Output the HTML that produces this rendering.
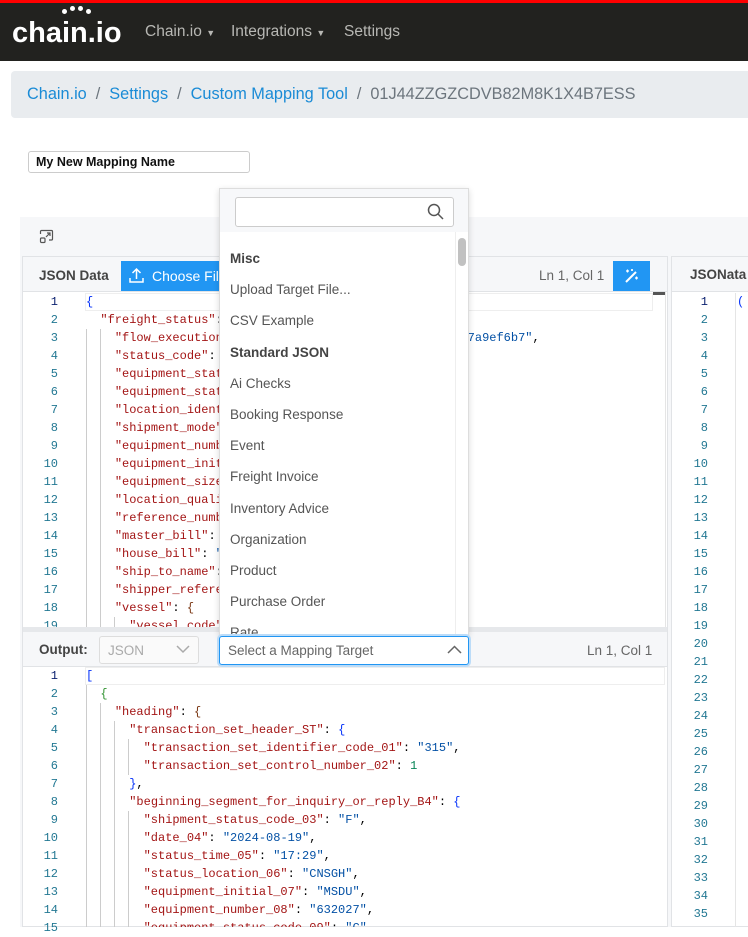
<!DOCTYPE html>
<html><head><meta charset="utf-8"><style>
*{box-sizing:border-box;margin:0;padding:0}
body{width:748px;height:927px;overflow:hidden;background:#fff;font-family:"Liberation Sans",sans-serif;position:relative}
.abs{position:absolute}
.nav{left:0;top:0;width:748px;height:61px;background:#22221f;border-top:3px solid #f00}
.nav .logo{left:12px;top:14px;color:#fff;font-size:29px;font-weight:bold;letter-spacing:0px}
.nav .m{top:20px;color:#b8b8b4;font-size:15.5px}
.crumb{left:11px;top:71px;width:750px;height:47px;background:#e9ecef;border-radius:4px;font-size:16.3px;color:#6c757d;padding:14px 0 0 16px;white-space:nowrap}
.crumb a{color:#1a8bd6;text-decoration:none}
.crumb span{margin:0 9px}
.mono{font-family:"Liberation Mono","DejaVu Sans Mono",monospace;font-size:12px;white-space:pre}
.ln{color:#237893;text-align:right;width:36px;line-height:18px}
.code{line-height:18px}
.k{color:#a31515}.s{color:#0451a5}.n{color:#098658}.b1{color:#0431fa}.b2{color:#319331}.b3{color:#7b3814}
.dd div{height:31.2px;line-height:31.2px;padding-left:10px;font-size:13.5px;color:#555}
</style></head><body>
<div class="abs nav">
  <div class="abs logo">chain.io</div>
  <div class="abs" style="left:62px;top:3px;width:30px;height:8px">
    <span class="abs" style="left:0;top:3px;width:5px;height:5px;border-radius:50%;background:#fff"></span>
    <span class="abs" style="left:8px;top:0;width:5px;height:5px;border-radius:50%;background:#fff"></span>
    <span class="abs" style="left:16px;top:0;width:5px;height:5px;border-radius:50%;background:#fff"></span>
    <span class="abs" style="left:24px;top:3px;width:5px;height:5px;border-radius:50%;background:#fff"></span>
  </div>
  <div class="abs m" style="left:145px">Chain.io <span style="font-size:9px">▼</span></div>
  <div class="abs m" style="left:231px">Integrations <span style="font-size:9px">▼</span></div>
  <div class="abs m" style="left:344px">Settings</div>
</div>
<div class="abs crumb"><a>Chain.io</a><span>/</span><a>Settings</a><span>/</span><a>Custom Mapping Tool</a><span>/</span>01J44ZZGZCDVB82M8K1X4B7ESS</div>
<div class="abs" style="left:28px;top:151px;width:222px;height:22px;border:1px solid #ccc;border-radius:3px;font-size:12.5px;font-weight:bold;padding:3px 0 0 7px;color:#111">My New Mapping Name</div>

<!-- panel area -->
<div class="abs" style="left:20px;top:217px;width:728px;height:710px;background:#f6f7f9"></div>
<svg class="abs" style="left:39px;top:229px" width="15" height="15" viewBox="0 0 15 15" fill="none" stroke="#555" stroke-width="1.2"><path d="M5 1.5h7.5a1 1 0 0 1 1 1v7.5a1 1 0 0 1-1 1H10"/><path d="M1.5 5v-2.5a1 1 0 0 1 1-1H5"/><rect x="1.5" y="9" width="4.5" height="4.5" rx="1"/><path d="M7 8l4-4M8 4h3v3"/></svg>

<!-- left editor -->
<div class="abs" style="left:22px;top:256px;width:646px;height:671px;background:#fff;border:1px solid #e1e3e6"></div>
<div class="abs" style="left:23px;top:257px;width:644px;height:35px;background:#f6f7f9;border-bottom:1px solid #e1e3e6"></div>
<div class="abs" style="left:39px;top:268px;font-size:13.5px;font-weight:bold;color:#444">JSON Data</div>
<div class="abs" style="left:121px;top:261px;width:110px;height:30px;background:#2196f3;color:#fff;font-size:14px;padding:7px 0 0 31px">Choose File</div>
<svg class="abs" style="left:128px;top:267px" width="17" height="17" viewBox="0 0 17 17" fill="none" stroke="#fff" stroke-width="1.5"><path d="M8.5 12V2M4.5 6l4-4 4 4M2 11v4h13v-4"/></svg>
<div class="abs" style="left:539px;top:268px;font-size:13.5px;color:#666">Ln 1, Col 1</div>
<div class="abs" style="left:613px;top:261px;width:37px;height:30px;background:#2196f3"></div>
<svg class="abs" style="left:622px;top:268px" width="18" height="16" viewBox="0 0 18 16" fill="none" stroke="#fff" stroke-width="2"><path d="M4 14L14 4"/><path d="M4 3h3M5.5 1.5v3M13 10h3M14.5 8.5v3M9 2h2M10 1v2" stroke-width="1.2"/></svg>
<div class="abs" style="left:665px;top:292px;width:1px;height:335px;background:#e5e5e5"></div>
<div class="abs" style="left:653px;top:292px;width:12px;height:3px;background:#555"></div>
<div class="abs" style="left:85px;top:293px;width:568px;height:18px;border:1px solid #eee"></div>
<div class="abs mono ln" style="left:22px;top:293px"><span style="color:#0b216f">1</span>
2
3
4
5
6
7
8
9
10
11
12
13
14
15
16
17
18
19</div>
<div class="abs" style="left:86px;top:329px;width:1px;height:298px;background:#ccc"></div>
<div class="abs" style="left:100px;top:329px;width:1px;height:298px;background:#ccc"></div>
<div class="abs" style="left:114px;top:617px;width:1px;height:10px;background:#ccc"></div>
<div class="abs" style="left:86px;top:293px;width:560px;height:334px;overflow:hidden"><div class="mono code"><span class="b1">{</span>
  <span class="k">"freight_status"</span>: <span class="b2">{</span>
    <span class="k">"flow_execution_id"</span>: <span class="s">"0a1b2c3d-4e5f-6a7b-8c9d-7727a9ef6b7"</span>,
    <span class="k">"status_code"</span>: <span class="s">"AE"</span>,
    <span class="k">"equipment_status"</span>: <span class="s">"E"</span>,
    <span class="k">"equipment_status_code"</span>: <span class="s">"E"</span>,
    <span class="k">"location_identifier"</span>: <span class="s">"CNSGH"</span>,
    <span class="k">"shipment_mode"</span>: <span class="s">"ocean"</span>,
    <span class="k">"equipment_number"</span>: <span class="s">"632027"</span>,
    <span class="k">"equipment_initial"</span>: <span class="s">"MSDU"</span>,
    <span class="k">"equipment_size"</span>: <span class="s">"40"</span>,
    <span class="k">"location_qualifier"</span>: <span class="s">"UN"</span>,
    <span class="k">"reference_number"</span>: <span class="s">"X"</span>,
    <span class="k">"master_bill"</span>: <span class="s">"X"</span>,
    <span class="k">"house_bill"</span>: <span class="s">"X"</span>,
    <span class="k">"ship_to_name"</span>: <span class="s">"X"</span>,
    <span class="k">"shipper_reference"</span>: <span class="s">"X"</span>,
    <span class="k">"vessel"</span>: <span class="b3">{</span>
      <span class="k">"vessel_code"</span>: <span class="s">"X"</span></div></div>

<!-- output section -->
<div class="abs" style="left:23px;top:627px;width:644px;height:5px;background:#e6e8eb"></div>
<div class="abs" style="left:23px;top:632px;width:644px;height:35px;background:#f6f7f9;border-bottom:1px solid #e1e3e6"></div>
<div class="abs" style="left:39px;top:642px;font-size:13.5px;font-weight:bold;color:#444">Output:</div>
<div class="abs" style="left:99px;top:636px;width:100px;height:28px;border:1px solid #ddd;border-radius:3px;background:#fafafa;color:#aaa;font-size:13.5px;padding:6px 0 0 8px">JSON</div>
<svg class="abs" style="left:176px;top:645px" width="14" height="9" viewBox="0 0 14 9" fill="none" stroke="#aaa" stroke-width="1.5"><path d="M1 1l6 6 6-6"/></svg>
<div class="abs" style="left:587px;top:643px;font-size:13.5px;color:#666">Ln 1, Col 1</div>
<div class="abs" style="left:85px;top:667px;width:580px;height:18px;border:1px solid #eee"></div>
<div class="abs mono ln" style="left:22px;top:667px"><span style="color:#0b216f">1</span>
2
3
4
5
6
7
8
9
10
11
12
13
14
15</div>
<div class="abs" style="left:86px;top:685px;width:1px;height:242px;background:#ccc"></div>
<div class="abs" style="left:100px;top:703px;width:1px;height:224px;background:#ccc"></div>
<div class="abs" style="left:114px;top:721px;width:1px;height:206px;background:#ccc"></div>
<div class="abs" style="left:128px;top:739px;width:1px;height:36px;background:#ccc"></div>
<div class="abs" style="left:128px;top:811px;width:1px;height:116px;background:#ccc"></div>
<div class="abs" style="left:86px;top:667px;width:578px;height:260px;overflow:hidden"><div class="mono code"><span class="b1">[</span>
  <span class="b2">{</span>
    <span class="k">"heading"</span>: <span class="b3">{</span>
      <span class="k">"transaction_set_header_ST"</span>: <span class="b1">{</span>
        <span class="k">"transaction_set_identifier_code_01"</span>: <span class="s">"315"</span>,
        <span class="k">"transaction_set_control_number_02"</span>: <span class="n">1</span>
      <span class="b1">}</span>,
      <span class="k">"beginning_segment_for_inquiry_or_reply_B4"</span>: <span class="b1">{</span>
        <span class="k">"shipment_status_code_03"</span>: <span class="s">"F"</span>,
        <span class="k">"date_04"</span>: <span class="s">"2024-08-19"</span>,
        <span class="k">"status_time_05"</span>: <span class="s">"17:29"</span>,
        <span class="k">"status_location_06"</span>: <span class="s">"CNSGH"</span>,
        <span class="k">"equipment_initial_07"</span>: <span class="s">"MSDU"</span>,
        <span class="k">"equipment_number_08"</span>: <span class="s">"632027"</span>,
        <span class="k">"equipment_status_code_09"</span>: <span class="s">"C"</span></div></div>

<!-- right editor -->
<div class="abs" style="left:671px;top:256px;width:80px;height:671px;background:#fff;border:1px solid #e1e3e6"></div>
<div class="abs" style="left:672px;top:257px;width:80px;height:35px;background:#f6f7f9;border-bottom:1px solid #e1e3e6"></div>
<div class="abs" style="left:690px;top:267px;font-size:13.5px;font-weight:bold;color:#444">JSONata</div>
<div class="abs" style="left:735px;top:293px;width:1px;height:634px;background:#e5e5e5"></div>
<div class="abs mono ln" style="left:672px;top:293px"><span style="color:#0b216f">1</span>
2
3
4
5
6
7
8
9
10
11
12
13
14
15
16
17
18
19
20
21
22
23
24
25
26
27
28
29
30
31
32
33
34
35</div>
<div class="abs mono code b1" style="left:737px;top:293px">(</div>

<!-- dropdown -->
<div class="abs" style="left:219px;top:188px;width:250px;height:448px;background:#fff;border:1px solid #ddd;box-shadow:0 2px 6px rgba(0,0,0,.15);overflow:hidden">
  <div style="height:43px;background:#f7f8fa;padding:8px 0 0 15px"><div style="width:219px;height:30px;background:#fff;border:1px solid #ccc;border-radius:3px"></div></div>
  <div class="dd" style="padding-top:11px">
    <div style="font-weight:bold;color:#444">Misc</div>
    <div>Upload Target File...</div>
    <div>CSV Example</div>
    <div style="font-weight:bold;color:#444">Standard JSON</div>
    <div>Ai Checks</div>
    <div>Booking Response</div>
    <div>Event</div>
    <div>Freight Invoice</div>
    <div>Inventory Advice</div>
    <div>Organization</div>
    <div>Product</div>
    <div>Purchase Order</div>
    <div>Rate</div>
  </div>
  <div class="abs" style="left:235px;top:43px;width:1px;height:410px;background:#eee"></div>
  <div class="abs" style="left:238px;top:49px;width:8px;height:28px;border-radius:4px;background:#c1c1c1"></div>
</div>
<svg class="abs" style="left:427px;top:203px" width="17" height="17" viewBox="0 0 17 17" fill="none" stroke="#555" stroke-width="1.5"><circle cx="7" cy="7" r="5.5"/><path d="M11 11l5 5"/></svg>
<div class="abs" style="left:219px;top:636px;width:250px;height:29px;background:#fff;border:1px solid #2196f3;border-radius:3px;box-shadow:0 0 0 2px #bcdcf8;font-size:13.5px;color:#666;padding:6px 0 0 8px">Select a Mapping Target</div>
<svg class="abs" style="left:447px;top:645px" width="15" height="9" viewBox="0 0 15 9" fill="none" stroke="#666" stroke-width="1.5"><path d="M1 8l6.5-6.5L14 8"/></svg>
</body></html>
